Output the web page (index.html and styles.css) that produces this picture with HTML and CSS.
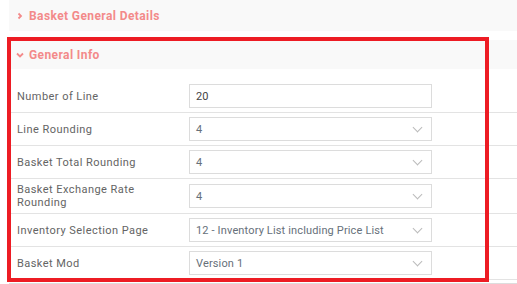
FILE: index.html
```html
<!DOCTYPE html>
<html lang="en">
<head>
    <meta charset="UTF-8">
    <title>Basket Settings</title>
    <link rel="stylesheet" href="styles.css">
</head>
<body>
    <div class="page">
        <div class="panel">
            <div class="panel-head head-closed">
                <svg class="chev" width="8" height="8" viewBox="0 0 8 8"><polyline points="2.5,1.5 5,4 2.5,6.5" /></svg>
                <span>Basket General Details</span>
            </div>
        </div>
        <div class="panel">
            <div class="panel-head head-open">
                <svg class="chev" width="8" height="8" viewBox="0 0 8 8"><polyline points="1,2.5 4,5.5 7,2.5" /></svg>
                <span>General Info</span>
            </div>
            <div class="panel-body">
                <div class="row">
                    <label>Number of Line</label>
                    <input class="field" type="text" value="20">
                </div>
                <div class="row">
                    <label>Line Rounding</label>
                    <div class="field select">4</div>
                </div>
                <div class="row">
                    <label>Basket Total Rounding</label>
                    <div class="field select">4</div>
                </div>
                <div class="row">
                    <label>Basket Exchange Rate Rounding</label>
                    <div class="field select">4</div>
                </div>
                <div class="row">
                    <label>Inventory Selection Page</label>
                    <div class="field select">12 - Inventory List including Price List</div>
                </div>
                <div class="row">
                    <label>Basket Mod</label>
                    <div class="field select">Version 1</div>
                </div>
            </div>
        </div>
        <div class="highlight"></div>
    </div>
</body>
</html>
```

FILE: styles.css
```css
* { margin: 0; padding: 0; box-sizing: border-box; }
body { font-family: 'Roboto', 'Liberation Sans', sans-serif; background: #fff; color: #555; }
.page { position: relative; padding-left: 9px; }
.panel-head { background: #f9f9f9; color: #f38a8a; font-weight: bold; font-size: 12px; letter-spacing: 0.4px; display: flex; align-items: center; padding-left: 7px; }
.head-closed { height: 31px; margin-bottom: 9px; }
.head-open { height: 29px; }
.chev { fill: none; stroke: #f38a8a; stroke-width: 1.8; margin-right: 5px; }
.panel-body { padding: 11px 0 3px; border-bottom: 1px solid #ddd; }
.row { display: grid; grid-template-columns: 180px 243px; align-items: center; padding: 4px 0; border-bottom: 1px solid #e3e3e3; }
.row label { font-size: 11px; letter-spacing: 0.45px; line-height: 13px; padding: 0 16px 0 8px; color: #646464; }
.field { height: 24px; border: 1px solid #dcdcdc; background: #fff; font-family: inherit; font-size: 11px; letter-spacing: 0.15px; padding: 0 6px; color: #444; display: flex; align-items: center; outline: none; }
.select { color: #66707a; position: relative; }
.select::after { content: ''; position: absolute; right: 10px; top: 6px; width: 6px; height: 6px; border-right: 1px solid #bbb; border-bottom: 1px solid #bbb; transform: rotate(45deg); }
.highlight { position: absolute; left: 7px; top: 37px; width: 482px; height: 245px; border: 4px solid #ed1c24; }
```
